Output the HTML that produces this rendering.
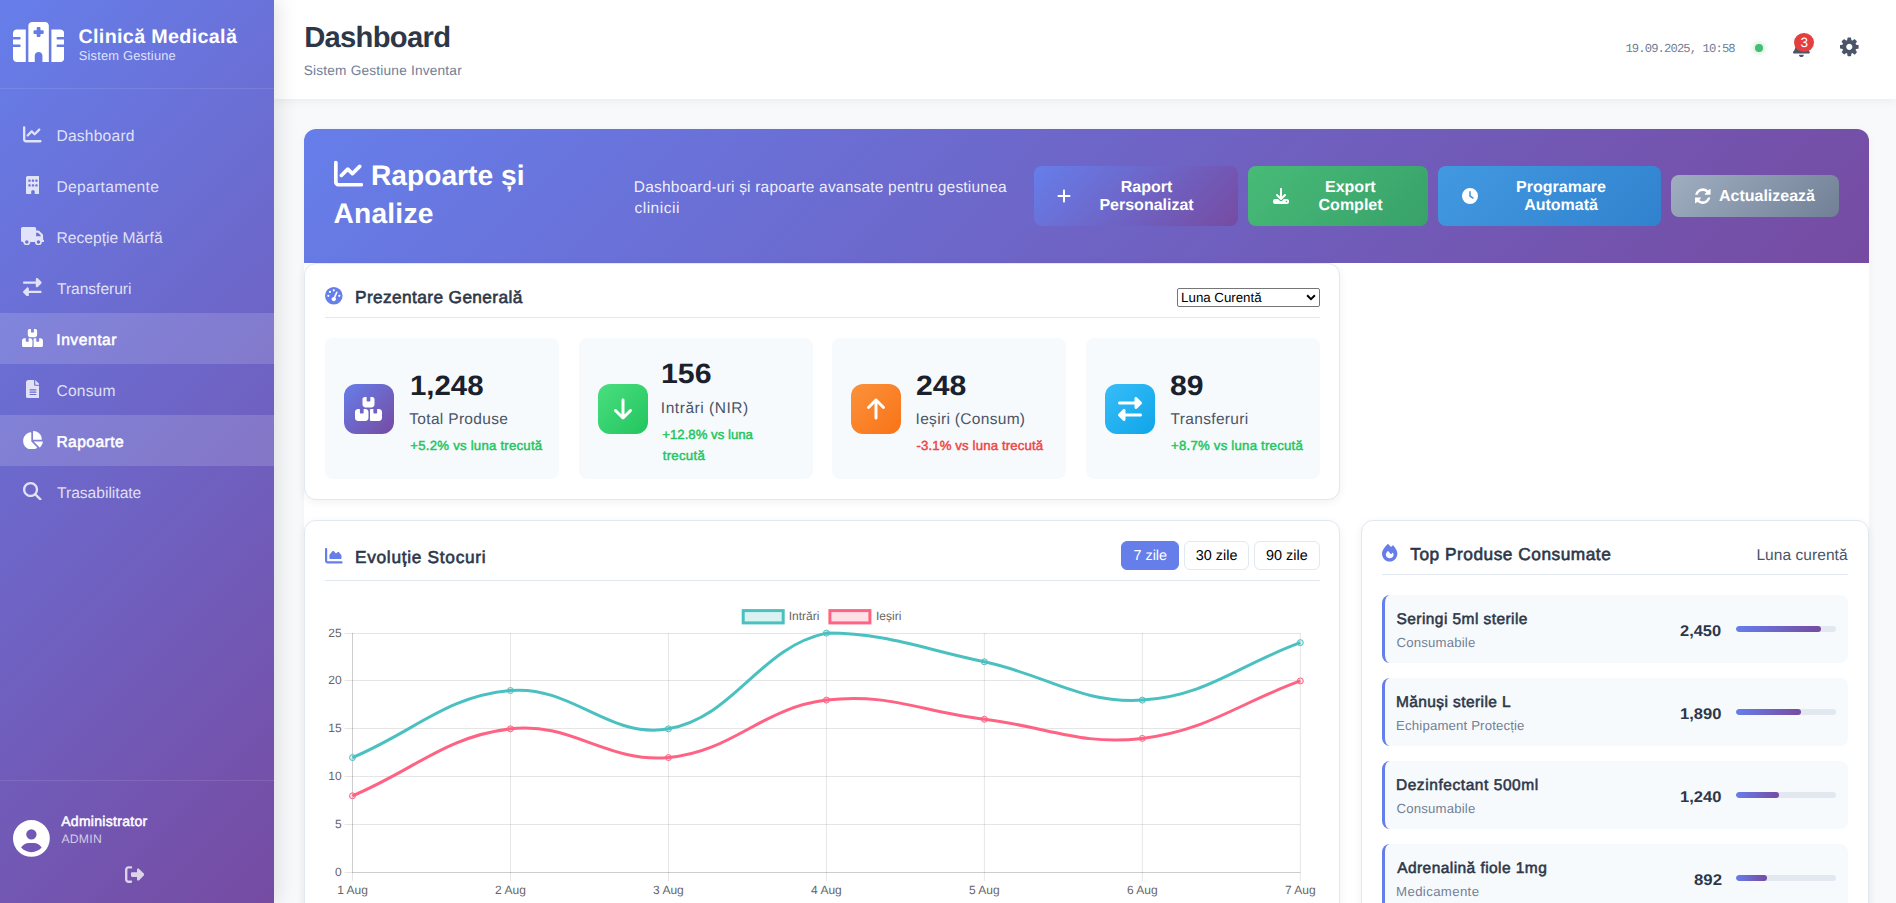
<!DOCTYPE html>
<html lang="ro">
<head>
<meta charset="utf-8">
<title>Clinică Medicală - Rapoarte și Analize</title>
<style>
*{box-sizing:border-box;margin:0;padding:0}
html,body{width:1896px;height:903px;overflow:hidden}
body{font-family:"Liberation Sans",sans-serif;background:#f8f9fb;color:#2d3748;position:relative;text-rendering:geometricPrecision}
.abs{position:absolute}
svg{display:block}
.t{position:absolute;white-space:nowrap;line-height:1;display:block;font-weight:400}
h1,h3,p{font-size:16px;font-weight:400}
#sidebar{position:absolute;left:0;top:0;width:274px;height:903px;background:linear-gradient(135deg,#667eea 0%,#764ba2 100%);box-shadow:4px 0 20px rgba(0,0,0,.11);z-index:5;color:#fff}
#sb-head{position:absolute;left:0;top:0;width:274px;height:89px;border-bottom:1px solid rgba(255,255,255,.1)}
.nav{position:absolute;left:0;width:274px;height:51px;display:block}
.nav.active{background:rgba(255,255,255,.15)}
#sb-foot{position:absolute;left:0;top:780px;width:274px;height:123px;border-top:1px solid rgba(255,255,255,.1)}
#topbar{position:absolute;left:274px;top:0;width:1622px;height:99px;background:#fff;box-shadow:0 2px 10px rgba(0,0,0,.06);z-index:3}
#panel{position:absolute;left:304px;top:129px;width:1565px;height:800px;background:#fff;border-radius:12px;box-shadow:0 2px 10px rgba(0,0,0,.04);z-index:1}
#banner{position:absolute;left:0;top:0;width:1565px;height:134px;border-radius:12px 12px 0 0;background:linear-gradient(135deg,#667eea 0%,#764ba2 100%)}
.btn{position:absolute;border-radius:8px}
.card{position:absolute;background:#fff;border:1px solid #e2e8f0;border-radius:12px;box-shadow:0 2px 10px rgba(0,0,0,.055)}
.hr{position:absolute;height:1px;background:#e2e8f0}
.tile{position:absolute;width:234px;height:141px;background:#f7fafc;border-radius:8px}
.ib{position:absolute;width:50px;height:50px;border-radius:12px}
.item{position:absolute;width:466px;height:68px;background:#f7fafc;border-left:3px solid #667eea;border-radius:8px}
.bar{position:absolute;width:100px;height:6px;border-radius:3px;background:#e2e8f0;overflow:hidden}
.bar i{display:block;height:6px;border-radius:3px;background:linear-gradient(90deg,#667eea,#764ba2)}
.sel{position:absolute;border:1px solid #767676;border-radius:2px;background:#fff}
.pbtn{position:absolute;border:1px solid #e2e8f0;border-radius:6px;background:#fff}
.pbtn.on{background:#667eea;border-color:#667eea}

</style>
</head>
<body>

<aside id="sidebar">
<div id="sb-head">
<svg class="abs" style="left:13.30px;top:22.10px;" width="51.20" height="40.00" viewBox="0 0 640 512" preserveAspectRatio="none"><path fill="#fff" d="M192 48c0-26.500 21.500-48 48-48L400 0c26.500 0 48 21.500 48 48l0 464-80 0 0-80c0-26.500-21.500-48-48-48s-48 21.500-48 48l0 80-80 0 0-464zM48 96l112 0 0 416L48 512c-26.500 0-48-21.500-48-48L0 320l80 0c8.800 0 16-7.200 16-16s-7.200-16-16-16L0 288l0-64 80 0c8.800 0 16-7.200 16-16s-7.200-16-16-16L0 192l0-48c0-26.500 21.500-48 48-48zm544 0c26.500 0 48 21.500 48 48l0 48-80 0c-8.800 0-16 7.200-16 16s7.200 16 16 16l80 0 0 64-80 0c-8.800 0-16 7.200-16 16s7.200 16 16 16l80 0 0 144c0 26.500-21.500 48-48 48l-112 0 0-416 112 0zM312 64c-8.800 0-16 7.200-16 16l0 24-24 0c-8.800 0-16 7.200-16 16l0 16c0 8.800 7.200 16 16 16l24 0 0 24c0 8.800 7.200 16 16 16l16 0c8.800 0 16-7.200 16-16l0-24 24 0c8.800 0 16-7.200 16-16l0-16c0-8.800-7.200-16-16-16l-24 0 0-24c0-8.800-7.200-16-16-16l-16 0z"/></svg>
<div class="brand">
<span class="t" style="left:78.49px;top:26px;line-height:22px;font-size:19.7px;color:#fff;font-weight:700;letter-spacing:0.346px;">Clinică Medicală</span>
<span class="t" style="left:78.72px;top:48px;line-height:15px;font-size:12.85px;color:rgba(255,255,255,.8);letter-spacing:0.201px;">Sistem Gestiune</span>
</div>
</div>
<nav>
<a class="nav" style="top:108.8px">
<svg class="abs" style="left:23.20px;top:16.00px;" width="18.60" height="18.60" viewBox="0 0 512 512" preserveAspectRatio="none"><path fill="rgba(255,255,255,.8)" d="M64 64c0-17.700-14.300-32-32-32S0 46.300 0 64L0 400c0 44.200 35.800 80 80 80l400 0c17.700 0 32-14.300 32-32s-14.300-32-32-32L80 416c-8.800 0-16-7.200-16-16L64 64zm406.600 86.600c12.500-12.500 12.500-32.800 0-45.300s-32.800-12.500-45.300 0L320 210.700l-57.400-57.400c-12.500-12.500-32.800-12.500-45.300 0l-112 112c-12.500 12.500-12.500 32.800 0 45.300s32.800 12.500 45.300 0L240 221.300l57.400 57.400c12.500 12.500 32.800 12.500 45.300 0l128-128z"/></svg>
<span class="t" style="left:56.42px;top:19.2px;line-height:18px;font-size:15.6px;color:rgba(255,255,255,.8);letter-spacing:0.224px;">Dashboard</span>
</a>
<a class="nav" style="top:159.8px">
<svg class="abs" style="left:25.52px;top:16.00px;" width="13.95" height="18.60" viewBox="0 0 384 512" preserveAspectRatio="none"><path fill="rgba(255,255,255,.8)" d="M48 0C21.500 0 0 21.500 0 48L0 464c0 26.500 21.500 48 48 48l96 0 0-80c0-26.500 21.500-48 48-48s48 21.500 48 48l0 80 96 0c26.500 0 48-21.500 48-48l0-416c0-26.500-21.500-48-48-48L48 0zM64 240c0-8.800 7.200-16 16-16l32 0c8.800 0 16 7.200 16 16l0 32c0 8.800-7.200 16-16 16l-32 0c-8.800 0-16-7.200-16-16l0-32zm112-16l32 0c8.800 0 16 7.200 16 16l0 32c0 8.800-7.200 16-16 16l-32 0c-8.800 0-16-7.200-16-16l0-32c0-8.800 7.200-16 16-16zm80 16c0-8.800 7.200-16 16-16l32 0c8.800 0 16 7.200 16 16l0 32c0 8.800-7.200 16-16 16l-32 0c-8.800 0-16-7.200-16-16l0-32zM80 96l32 0c8.800 0 16 7.200 16 16l0 32c0 8.800-7.200 16-16 16l-32 0c-8.800 0-16-7.200-16-16l0-32c0-8.800 7.200-16 16-16zm80 16c0-8.800 7.200-16 16-16l32 0c8.800 0 16 7.200 16 16l0 32c0 8.800-7.200 16-16 16l-32 0c-8.800 0-16-7.200-16-16l0-32zM272 96l32 0c8.800 0 16 7.200 16 16l0 32c0 8.800-7.200 16-16 16l-32 0c-8.800 0-16-7.200-16-16l0-32c0-8.800 7.200-16 16-16z"/></svg>
<span class="t" style="left:56.42px;top:19.2px;line-height:18px;font-size:15.6px;color:rgba(255,255,255,.8);letter-spacing:0.331px;">Departamente</span>
</a>
<a class="nav" style="top:210.8px">
<svg class="abs" style="left:20.88px;top:16.00px;" width="23.25" height="18.60" viewBox="0 0 640 512" preserveAspectRatio="none"><path fill="rgba(255,255,255,.8)" d="M48 0C21.500 0 0 21.500 0 48L0 368c0 26.500 21.500 48 48 48l16 0c0 53 43 96 96 96s96-43 96-96l128 0c0 53 43 96 96 96s96-43 96-96l32 0c17.700 0 32-14.300 32-32s-14.300-32-32-32l0-64 0-32 0-18.700c0-17-6.700-33.300-18.700-45.300L512 114.700c-12-12-28.300-18.700-45.300-18.700L416 96l0-48c0-26.500-21.500-48-48-48L48 0zM416 160l50.700 0L544 237.300l0 18.700-128 0 0-96zM112 416a48 48 0 1 1 96 0 48 48 0 1 1 -96 0zm368-48a48 48 0 1 1 0 96 48 48 0 1 1 0-96z"/></svg>
<span class="t" style="left:56.42px;top:19.2px;line-height:18px;font-size:15.6px;color:rgba(255,255,255,.8);letter-spacing:0.033px;">Recepție Mărfă</span>
</a>
<a class="nav" style="top:261.8px">
<svg class="abs" style="left:23.20px;top:16.00px;" width="18.60" height="18.60" viewBox="0 0 512 512" preserveAspectRatio="none"><path fill="rgba(255,255,255,.8)" d="M32 96l320 0 0-64c0-12.900 7.800-24.600 19.800-29.600s25.700-2.200 34.900 6.900l96 96c6 6 9.400 14.100 9.400 22.600s-3.400 16.600-9.400 22.600l-96 96c-9.200 9.200-22.900 11.900-34.900 6.900s-19.800-16.600-19.800-29.600l0-64L32 160c-17.700 0-32-14.300-32-32s14.300-32 32-32zM480 352c17.700 0 32 14.300 32 32s-14.300 32-32 32l-320 0 0 64c0 12.900-7.800 24.600-19.800 29.600s-25.700 2.200-34.900-6.900l-96-96c-6-6-9.400-14.100-9.400-22.600s3.400-16.600 9.400-22.600l96-96c9.200-9.200 22.900-11.900 34.900-6.900s19.800 16.600 19.800 29.600l0 64 320 0z"/></svg>
<span class="t" style="left:57.05px;top:19.2px;line-height:18px;font-size:15.6px;color:rgba(255,255,255,.8);letter-spacing:-0.041px;">Transferuri</span>
</a>
<a class="nav active" style="top:312.8px">
<svg class="abs" style="left:22.04px;top:16.00px;" width="20.93" height="18.60" viewBox="0 0 576 512" preserveAspectRatio="none"><path fill="#fff" d="M248 0L208 0c-26.500 0-48 21.500-48 48l0 112c0 35.300 28.700 64 64 64l128 0c35.300 0 64-28.700 64-64l0-112c0-26.500-21.500-48-48-48L328 0l0 80c0 8.800-7.200 16-16 16l-48 0c-8.800 0-16-7.200-16-16l0-80zM64 256c-35.300 0-64 28.700-64 64L0 448c0 35.300 28.700 64 64 64l160 0c35.300 0 64-28.700 64-64l0-128c0-35.300-28.700-64-64-64l-40 0 0 80c0 8.800-7.200 16-16 16l-48 0c-8.800 0-16-7.200-16-16l0-80-40 0zM352 512l160 0c35.300 0 64-28.700 64-64l0-128c0-35.300-28.700-64-64-64l-40 0 0 80c0 8.800-7.200 16-16 16l-48 0c-8.800 0-16-7.200-16-16l0-80-40 0c-15 0-28.800 5.100-39.700 13.800c4.900 10.400 7.700 22 7.700 34.200l0 160c0 12.200-2.800 23.800-7.700 34.200C323.200 506.900 337 512 352 512z"/></svg>
<span class="t" style="left:56.26px;top:19.2px;line-height:18px;font-size:15.6px;color:#fff;letter-spacing:0.548px;-webkit-text-stroke:0.55px #fff;">Inventar</span>
</a>
<a class="nav" style="top:363.8px">
<svg class="abs" style="left:25.52px;top:16.00px;" width="13.95" height="18.60" viewBox="0 0 384 512" preserveAspectRatio="none"><path fill="rgba(255,255,255,.8)" d="M64 0C28.700 0 0 28.700 0 64L0 448c0 35.300 28.700 64 64 64l256 0c35.300 0 64-28.700 64-64l0-288-128 0c-17.700 0-32-14.300-32-32L224 0 64 0zM256 0l0 128 128 0L256 0zM112 256l160 0c8.800 0 16 7.200 16 16s-7.200 16-16 16l-160 0c-8.800 0-16-7.200-16-16s7.200-16 16-16zm0 64l160 0c8.800 0 16 7.200 16 16s-7.200 16-16 16l-160 0c-8.800 0-16-7.200-16-16s7.200-16 16-16zm0 64l160 0c8.800 0 16 7.200 16 16s-7.200 16-16 16l-160 0c-8.800 0-16-7.200-16-16s7.200-16 16-16z"/></svg>
<span class="t" style="left:56.61px;top:19.2px;line-height:18px;font-size:15.6px;color:rgba(255,255,255,.8);letter-spacing:0.148px;">Consum</span>
</a>
<a class="nav active" style="top:414.8px">
<svg class="abs" style="left:22.04px;top:16.00px;" width="20.93" height="18.60" viewBox="0 0 576 512" preserveAspectRatio="none"><path fill="#fff" d="M304 240l0-223.400c0-9 7-16.600 16-16.600C443.700 0 544 100.300 544 224c0 9-7.600 16-16.600 16L304 240zM32 272C32 150.700 122.100 50.300 239 34.300c9.200-1.300 17 6.100 17 15.400L256 288 412.500 444.500c6.700 6.700 6.200 17.700-1.500 23.100C371.800 495.600 323.800 512 272 512C139.500 512 32 404.600 32 272zm526.400 16c9.300 0 16.600 7.800 15.400 17c-7.700 55.900-34.600 105.600-73.900 142.300c-6 5.600-15.400 5.200-21.200-.7L320 288l238.400 0z"/></svg>
<span class="t" style="left:56.42px;top:19.2px;line-height:18px;font-size:15.6px;color:#fff;letter-spacing:0.431px;-webkit-text-stroke:0.55px #fff;">Rapoarte</span>
</a>
<a class="nav" style="top:465.8px">
<svg class="abs" style="left:23.20px;top:16.00px;" width="18.60" height="18.60" viewBox="0 0 512 512" preserveAspectRatio="none"><path fill="rgba(255,255,255,.8)" d="M416 208c0 45.900-14.900 88.300-40 122.700L502.600 457.400c12.500 12.500 12.500 32.800 0 45.300s-32.800 12.500-45.300 0L330.700 376c-34.400 25.200-76.800 40-122.700 40C93.100 416 0 322.900 0 208S93.100 0 208 0S416 93.100 416 208zM208 352a144 144 0 1 0 0-288 144 144 0 1 0 0 288z"/></svg>
<span class="t" style="left:57.05px;top:19.2px;line-height:18px;font-size:15.6px;color:rgba(255,255,255,.8);letter-spacing:-0.010px;">Trasabilitate</span>
</a>
</nav>
<div id="sb-foot">
<svg class="abs" style="left:13.40px;top:39.00px;" width="36.80" height="36.80" viewBox="0 0 512 512" preserveAspectRatio="none"><path fill="#fff" d="M399 384.200C376.900 345.800 335.400 320 288 320l-64 0c-47.400 0-88.900 25.800-111 64.200c35.200 39.200 86.200 63.800 143 63.800s107.800-24.700 143-63.800zM0 256a256 256 0 1 1 512 0A256 256 0 1 1 0 256zm256 16a72 72 0 1 0 0-144 72 72 0 1 0 0 144z"/></svg>
<div class="user">
<span class="t" style="left:61.17px;top:32px;line-height:16px;font-size:14px;color:#fff;letter-spacing:0.299px;-webkit-text-stroke:0.5px #fff;">Administrator</span>
<span class="t" style="left:61.38px;top:51px;line-height:15px;font-size:12.2px;color:rgba(255,255,255,.7);letter-spacing:0.272px;">ADMIN</span>
</div>
<a class="logout">
<svg class="abs" style="left:124.50px;top:84.40px;" width="19.20" height="19.20" viewBox="0 0 512 512" preserveAspectRatio="none"><path fill="rgba(255,255,255,.75)" d="M377.900 105.900L500.700 228.700c7.200 7.200 11.300 17.100 11.300 27.300s-4.100 20.100-11.300 27.300L377.900 406.100c-6.400 6.400-15 9.900-24 9.900c-18.700 0-33.900-15.200-33.900-33.900l0-62.100-128 0c-17.700 0-32-14.300-32-32l0-64c0-17.700 14.300-32 32-32l128 0 0-62.100c0-18.700 15.200-33.900 33.900-33.900c9 0 17.600 3.600 24 9.900zM160 96L96 96c-17.700 0-32 14.300-32 32l0 256c0 17.700 14.300 32 32 32l64 0c17.700 0 32 14.300 32 32s-14.300 32-32 32l-64 0c-53 0-96-43-96-96L0 128C0 75 43 32 96 32l64 0c17.700 0 32 14.300 32 32s-14.300 32-32 32z"/></svg>
</a>
</div>
</aside>
<header id="topbar">
<div class="titles">
<span class="t" style="left:30.15px;top:22px;line-height:32px;font-size:29.2px;color:#2d3748;font-weight:700;letter-spacing:-0.697px;z-index:1;">Dashboard</span>
<span class="t" style="left:29.68px;top:63px;line-height:16px;font-size:13.7px;color:#718096;letter-spacing:0.190px;">Sistem Gestiune Inventar</span>
</div>
<div class="tools">
<span class="t" style="left:1351.42px;top:42px;line-height:15px;font-size:12.2px;color:#718096;letter-spacing:-0.879px;font-family:'Liberation Mono',monospace;">19.09.2025, 10:58</span>
<span class="abs" style="left:1481px;top:44px;width:8px;height:8px;border-radius:50%;background:#48bb78;box-shadow:0 0 6px rgba(72,187,120,.6)"></span>
<a class="bellwrap">
<svg class="abs" style="left:1518.90px;top:37.50px;" width="16.80" height="19.20" viewBox="0 0 448 512" preserveAspectRatio="none"><path fill="#4a5568" d="M224 0c-17.700 0-32 14.300-32 32l0 19.200C119 66 64 130.600 64 208l0 18.800c0 47-17.300 92.400-48.500 127.600l-7.400 8.300c-8.400 9.400-10.400 22.900-5.300 34.400S19.400 416 32 416l384 0c12.600 0 24-7.400 29.200-18.900s3.100-25-5.300-34.400l-7.400-8.300C401.300 319.200 384 273.900 384 226.800l0-18.800c0-77.400-55-142-128-156.800L256 32c0-17.700-14.300-32-32-32zm45.300 493.300c12-12 18.700-28.300 18.700-45.300l-64 0-64 0c0 17 6.700 33.300 18.700 45.300s28.300 18.700 45.300 18.700s33.300-6.700 45.300-18.700z"/></svg>
<span class="abs" style="left:1520px;top:32.8px;width:20px;height:19.2px;border-radius:50%;background:#e53e3e"></span>
<span class="t" style="left:1526.43px;top:35px;line-height:16px;font-size:13.5px;color:#fff;">3</span>
</a>
<a class="gear">
<svg class="abs" style="left:1566.30px;top:36.20px;" width="18.60" height="21.70" viewBox="0 0 1536 1792" preserveAspectRatio="none"><g transform="translate(0,1536) scale(1,-1)"><path fill="#4a5568" d="M1024 640q0 106 -75 181t-181 75t-181 -75t-75 -181t75 -181t181 -75t181 75t75 181zM1536 749v-222q0 -12 -8 -23t-20 -13l-185 -28q-19 -54 -39 -91q35 -50 107 -138q10 -12 10 -25t-9 -23q-27 -37 -99 -108t-94 -71q-12 0 -26 9l-138 108q-44 -23 -91 -38 q-16 -136 -29 -186q-7 -28 -36 -28h-222q-14 0 -24.5 8.5t-11.5 21.5l-28 184q-49 16 -90 37l-141 -107q-10 -9 -25 -9q-14 0 -25 11q-126 114 -165 168q-7 10 -7 23q0 12 8 23q15 21 51 66.5t54 70.5q-27 50 -41 99l-183 27q-13 2 -21 12.5t-8 23.5v222q0 12 8 23t19 13 l186 28q14 46 39 92q-40 57 -107 138q-10 12 -10 24q0 10 9 23q26 36 98.5 107.5t94.5 71.5q13 0 26 -10l138 -107q44 23 91 38q16 136 29 186q7 28 36 28h222q14 0 24.5 -8.5t11.5 -21.5l28 -184q49 -16 90 -37l142 107q9 9 24 9q13 0 25 -10q129 -119 165 -170q7 -8 7 -22 q0 -12 -8 -23q-15 -21 -51 -66.5t-54 -70.5q26 -50 41 -98l183 -28q13 -2 21 -12.5t8 -23.5z"/></g></svg>
</a>
</div>
</header>
<main id="panel">
<section id="banner">
<h1>
<svg class="abs" style="left:29.90px;top:30.30px;" width="29.40" height="29.40" viewBox="0 0 512 512" preserveAspectRatio="none"><path fill="#fff" d="M64 64c0-17.700-14.300-32-32-32S0 46.300 0 64L0 400c0 44.200 35.800 80 80 80l400 0c17.700 0 32-14.300 32-32s-14.300-32-32-32L80 416c-8.800 0-16-7.200-16-16L64 64zm406.600 86.600c12.500-12.500 12.500-32.800 0-45.300s-32.800-12.500-45.300 0L320 210.700l-57.400-57.400c-12.500-12.500-32.800-12.500-45.300 0l-112 112c-12.500 12.500-12.500 32.800 0 45.300s32.800 12.500 45.300 0L240 221.300l57.400 57.400c12.500 12.500 32.800 12.500 45.300 0l128-128z"/></svg>
<span class="t" style="left:67.01px;top:31px;line-height:31px;font-size:28.2px;color:#fff;font-weight:700;letter-spacing:-0.005px;">Rapoarte și</span>
<span class="t" style="left:29.50px;top:69px;line-height:31px;font-size:28.2px;color:#fff;font-weight:700;letter-spacing:0.196px;">Analize</span>
</h1>
<p>
<span class="t" style="left:329.83px;top:50px;line-height:18px;font-size:15.5px;color:rgba(255,255,255,.9);letter-spacing:0.200px;">Dashboard-uri și rapoarte avansate pentru gestiunea</span>
<span class="t" style="left:330.44px;top:71px;line-height:18px;font-size:15.5px;color:rgba(255,255,255,.9);letter-spacing:0.508px;">clinicii</span>
</p>
<div class="actions">
<div class="btn" role="button" style="left:729.5px;top:37px;width:204.5px;height:60px;background:linear-gradient(135deg,#667eea 0%,#764ba2 100%)"><svg class="abs" style="left:23.50px;top:21.90px;" width="14.00" height="16.00" viewBox="0 0 448 512" preserveAspectRatio="none"><path fill="#fff" d="M256 80c0-17.700-14.300-32-32-32s-32 14.300-32 32l0 144L48 224c-17.700 0-32 14.300-32 32s14.300 32 32 32l144 0 0 144c0 17.700 14.300 32 32 32s32-14.300 32-32l0-144 144 0c17.700 0 32-14.300 32-32s-14.300-32-32-32l-144 0 0-144z"/></svg><span class="t" style="left:87.28px;top:13px;line-height:18px;font-size:16px;color:#fff;font-weight:700;">Raport</span><span class="t" style="left:65.93px;top:31px;line-height:18px;font-size:16px;color:#fff;font-weight:700;">Personalizat</span></div>
<div class="btn" role="button" style="left:944px;top:37px;width:180px;height:60px;background:linear-gradient(135deg,#48bb78 0%,#38a169 100%)"><svg class="abs" style="left:24.60px;top:21.90px;" width="16.00" height="16.00" viewBox="0 0 512 512" preserveAspectRatio="none"><path fill="#fff" d="M288 32c0-17.700-14.300-32-32-32s-32 14.300-32 32l0 242.700-73.400-73.400c-12.500-12.500-32.800-12.500-45.300 0s-12.500 32.800 0 45.300l128 128c12.500 12.500 32.800 12.500 45.300 0l128-128c12.500-12.500 12.500-32.800 0-45.300s-32.800-12.500-45.300 0L288 274.700 288 32zM64 352c-35.300 0-64 28.700-64 64l0 32c0 35.300 28.700 64 64 64l384 0c35.300 0 64-28.700 64-64l0-32c0-35.300-28.700-64-64-64l-101.500 0-45.300 45.300c-25 25-65.500 25-90.500 0L165.500 352 64 352zm368 56a24 24 0 1 1 0 48 24 24 0 1 1 0-48z"/></svg><span class="t" style="left:77.03px;top:13px;line-height:18px;font-size:16px;color:#fff;font-weight:700;">Export</span><span class="t" style="left:70.57px;top:31px;line-height:18px;font-size:16px;color:#fff;font-weight:700;">Complet</span></div>
<div class="btn" role="button" style="left:1134px;top:37px;width:223px;height:60px;background:linear-gradient(135deg,#4299e1 0%,#3182ce 100%)"><svg class="abs" style="left:23.70px;top:21.90px;" width="16.00" height="16.00" viewBox="0 0 512 512" preserveAspectRatio="none"><path fill="#fff" d="M256 0a256 256 0 1 1 0 512A256 256 0 1 1 256 0zM232 120l0 136c0 8 4 15.500 10.700 20l96 64c11 7.400 25.900 4.400 33.300-6.700s4.400-25.900-6.700-33.300L280 243.200 280 120c0-13.300-10.700-24-24-24s-24 10.700-24 24z"/></svg><span class="t" style="left:78.12px;top:13px;line-height:18px;font-size:16px;color:#fff;font-weight:700;">Programare</span><span class="t" style="left:86.16px;top:31px;line-height:18px;font-size:16px;color:#fff;font-weight:700;">Automată</span></div>
<div class="btn" role="button" style="left:1367px;top:46px;width:168px;height:42px;background:linear-gradient(135deg,#a0aec0 0%,#718096 100%)"><svg class="abs" style="left:24.20px;top:12.20px;" width="15.60" height="18.20" viewBox="0 0 1536 1792" preserveAspectRatio="none"><g transform="translate(0,1536) scale(1,-1)"><path fill="#fff" d="M1511 480q0 -5 -1 -7q-64 -268 -268 -434.5t-478 -166.5q-146 0 -282.5 55t-243.5 157l-129 -129q-19 -19 -45 -19t-45 19t-19 45v448q0 26 19 45t45 19h448q26 0 45 -19t19 -45t-19 -45l-137 -137q71 -66 161 -102t187 -36q134 0 250 65t186 179q11 17 53 117 q8 23 30 23h192q13 0 22.5 -9.5t9.5 -22.5zM1536 1280v-448q0 -26 -19 -45t-45 -19h-448q-26 0 -45 19t-19 45t19 45l138 138q-148 137 -349 137q-134 0 -250 -65t-186 -179q-11 -17 -53 -117q-8 -23 -30 -23h-199q-13 0 -22.5 9.5t-9.5 22.5v7q65 268 270 434.5t480 166.5 q146 0 284 -55.5t245 -156.5l130 129q19 19 45 19t45 -19t19 -45z"/></g></svg><span class="t" style="left:47.93px;top:13px;line-height:18px;font-size:16px;color:#fff;font-weight:700;">Actualizează</span></div>
</div>
</section>
<section class="card" style="left:0px;top:134px;width:1036px;height:237px">
<h3>
<svg class="abs" style="left:20.20px;top:23.20px;" width="17.60" height="17.60" viewBox="0 0 512 512" preserveAspectRatio="none"><path fill="#667eea" d="M0 256a256 256 0 1 1 512 0A256 256 0 1 1 0 256zM288 96a32 32 0 1 0 -64 0 32 32 0 1 0 64 0zM256 416c35.300 0 64-28.700 64-64c0-17.400-6.900-33.100-18.100-44.600L366 161.700c5.300-12.100-.2-26.300-12.300-31.600s-26.300 .2-31.600 12.300L257.900 288c-.6 0-1.300 0-1.900 0c-35.300 0-64 28.700-64 64s28.700 64 64 64zM176 144a32 32 0 1 0 -64 0 32 32 0 1 0 64 0zM96 288a32 32 0 1 0 0-64 32 32 0 1 0 0 64zm352-32a32 32 0 1 0 -64 0 32 32 0 1 0 64 0z"/></svg>
<span class="t" style="left:50.08px;top:23px;line-height:20px;font-size:17.3px;color:#2d3748;letter-spacing:0.377px;-webkit-text-stroke:0.6px #2d3748;">Prezentare Generală</span>
</h3>
<div class="sel" style="left:872px;top:24px;width:143px;height:19px">
<span class="t" style="left:3.11px;top:1px;line-height:16px;font-size:13.33px;color:#000;letter-spacing:-0.026px;">Luna Curentă</span>
<svg class="abs" style="left:127.5px;top:4.5px" width="10" height="7" viewBox="0 0 10 7"><path d="M1.1 1.3 L5 5.1 L8.9 1.3" fill="none" stroke="#000" stroke-width="2" stroke-linecap="butt" stroke-linejoin="miter"/></svg>
</div>
<div class="hr" style="left:20px;top:53px;width:995px"></div>
<div class="tile" style="left:20px;top:74px">
<div class="ib" style="left:19.3px;top:46px;background:linear-gradient(135deg,#667eea 0%,#764ba2 100%)">
<svg class="abs" style="left:11.20px;top:13.00px;" width="27.00" height="24.00" viewBox="0 0 576 512" preserveAspectRatio="none"><path fill="#fff" d="M248 0L208 0c-26.500 0-48 21.500-48 48l0 112c0 35.300 28.700 64 64 64l128 0c35.300 0 64-28.700 64-64l0-112c0-26.500-21.500-48-48-48L328 0l0 80c0 8.800-7.200 16-16 16l-48 0c-8.800 0-16-7.200-16-16l0-80zM64 256c-35.300 0-64 28.700-64 64L0 448c0 35.300 28.700 64 64 64l160 0c35.300 0 64-28.700 64-64l0-128c0-35.300-28.700-64-64-64l-40 0 0 80c0 8.800-7.200 16-16 16l-48 0c-8.800 0-16-7.200-16-16l0-80-40 0zM352 512l160 0c35.300 0 64-28.700 64-64l0-128c0-35.300-28.700-64-64-64l-40 0 0 80c0 8.800-7.200 16-16 16l-48 0c-8.800 0-16-7.200-16-16l0-80-40 0c-15 0-28.800 5.100-39.700 13.800c4.900 10.400 7.700 22 7.700 34.200l0 160c0 12.200-2.800 23.800-7.700 34.200C323.200 506.900 337 512 352 512z"/></svg>
</div>
<div class="meta">
<span class="t" style="left:85.15px;top:33px;line-height:30px;font-size:28px;color:#1a202c;font-weight:700;transform:scaleX(1.0496);transform-origin:0 0;">1,248</span>
<span class="t" style="left:84.25px;top:73px;line-height:18px;font-size:15.5px;color:#4a5568;letter-spacing:0.321px;">Total Produse</span>
<span class="t" style="left:85.36px;top:100px;line-height:16px;font-size:13.2px;color:#22c55e;letter-spacing:0.228px;-webkit-text-stroke:0.45px #22c55e;">+5.2% vs luna trecută</span>
</div>
</div>
<div class="tile" style="left:274px;top:74px">
<div class="ib" style="left:19.3px;top:46px;background:linear-gradient(135deg,#4ade80 0%,#22c55e 100%)">
<svg class="abs" style="left:15.70px;top:13.00px;" width="18.00" height="24.00" viewBox="0 0 384 512" preserveAspectRatio="none"><path fill="#fff" d="M169.400 470.600c12.500 12.500 32.800 12.500 45.300 0l160-160c12.500-12.500 12.500-32.800 0-45.300s-32.800-12.500-45.300 0L224 370.800 224 64c0-17.700-14.300-32-32-32s-32 14.300-32 32l0 306.700L54.600 265.400c-12.500-12.500-32.800-12.500-45.300 0s-12.500 32.800 0 45.300l160 160z"/></svg>
</div>
<div class="meta">
<span class="t" style="left:82.49px;top:21px;line-height:30px;font-size:28px;color:#1a202c;font-weight:700;transform:scaleX(1.0832);transform-origin:0 0;">156</span>
<span class="t" style="left:81.87px;top:62px;line-height:18px;font-size:15.5px;color:#4a5568;letter-spacing:0.537px;">Intrări (NIR)</span>
<span class="t" style="left:83.26px;top:89px;line-height:16px;font-size:13.2px;color:#22c55e;letter-spacing:0.008px;-webkit-text-stroke:0.45px #22c55e;">+12.8% vs luna</span>
<span class="t" style="left:83.70px;top:110px;line-height:16px;font-size:13.2px;color:#22c55e;letter-spacing:0.295px;-webkit-text-stroke:0.45px #22c55e;">trecută</span>
</div>
</div>
<div class="tile" style="left:526.7px;top:74px">
<div class="ib" style="left:19.3px;top:46px;background:linear-gradient(135deg,#fb923c 0%,#f97316 100%)">
<svg class="abs" style="left:15.70px;top:13.00px;" width="18.00" height="24.00" viewBox="0 0 384 512" preserveAspectRatio="none"><path fill="#fff" d="M214.600 41.400c-12.500-12.500-32.800-12.500-45.300 0l-160 160c-12.500 12.500-12.500 32.800 0 45.300s32.800 12.500 45.300 0L160 141.200 160 448c0 17.700 14.300 32 32 32s32-14.300 32-32l0-306.700L329.400 246.600c12.500 12.500 32.800 12.500 45.300 0s12.500-32.800 0-45.300l-160-160z"/></svg>
</div>
<div class="meta">
<span class="t" style="left:84.25px;top:33px;line-height:30px;font-size:28px;color:#1a202c;font-weight:700;transform:scaleX(1.0783);transform-origin:0 0;">248</span>
<span class="t" style="left:83.87px;top:73px;line-height:18px;font-size:15.5px;color:#4a5568;letter-spacing:0.315px;">Ieșiri (Consum)</span>
<span class="t" style="left:84.71px;top:100px;line-height:16px;font-size:13.2px;color:#ef4444;letter-spacing:0.140px;-webkit-text-stroke:0.45px #ef4444;">-3.1% vs luna trecută</span>
</div>
</div>
<div class="tile" style="left:781px;top:74px">
<div class="ib" style="left:19.3px;top:46px;background:linear-gradient(135deg,#38bdf8 0%,#0ea5e9 100%)">
<svg class="abs" style="left:12.70px;top:13.00px;" width="24.00" height="24.00" viewBox="0 0 512 512" preserveAspectRatio="none"><path fill="#fff" d="M32 96l320 0 0-64c0-12.900 7.800-24.600 19.800-29.600s25.700-2.200 34.900 6.900l96 96c6 6 9.400 14.100 9.400 22.600s-3.400 16.600-9.400 22.600l-96 96c-9.200 9.200-22.900 11.900-34.900 6.900s-19.800-16.600-19.800-29.600l0-64L32 160c-17.700 0-32-14.300-32-32s14.300-32 32-32zM480 352c17.700 0 32 14.300 32 32s-14.300 32-32 32l-320 0 0 64c0 12.900-7.800 24.600-19.800 29.600s-25.700 2.200-34.900-6.900l-96-96c-6-6-9.400-14.100-9.400-22.600s3.400-16.600 9.400-22.600l96-96c9.200-9.200 22.900-11.900 34.900-6.900s19.800 16.600 19.800 29.600l0 64 320 0z"/></svg>
</div>
<div class="meta">
<span class="t" style="left:83.94px;top:33px;line-height:30px;font-size:28px;color:#1a202c;font-weight:700;transform:scaleX(1.0777);transform-origin:0 0;">89</span>
<span class="t" style="left:84.55px;top:73px;line-height:18px;font-size:15.5px;color:#4a5568;letter-spacing:0.333px;">Transferuri</span>
<span class="t" style="left:85.06px;top:100px;line-height:16px;font-size:13.2px;color:#22c55e;letter-spacing:0.228px;-webkit-text-stroke:0.45px #22c55e;">+8.7% vs luna trecută</span>
</div>
</div>
</section>
<section class="card" style="left:0px;top:391px;width:1036px;height:420px">
<h3>
<svg class="abs" style="left:20.20px;top:26.20px;" width="17.60" height="17.60" viewBox="0 0 512 512" preserveAspectRatio="none"><path fill="#667eea" d="M64 64c0-17.700-14.300-32-32-32S0 46.300 0 64L0 400c0 44.200 35.800 80 80 80l400 0c17.700 0 32-14.300 32-32s-14.300-32-32-32L80 416c-8.800 0-16-7.200-16-16L64 64zm96 288l288 0c17.700 0 32-14.300 32-32l0-68.200c0-7.600-2.700-15-7.700-20.800l-65.800-76.800c-12.100-14.200-33.700-15-46.900-1.800l-21 21c-10 10-26.400 9.200-35.400-1.600l-39.200-47c-12.600-15.100-35.700-15.400-48.700-.6L135.900 215c-5.100 5.800-7.900 13.300-7.900 21.100l0 84c0 17.700 14.300 32 32 32z"/></svg>
<span class="t" style="left:49.98px;top:26px;line-height:20px;font-size:17.3px;color:#2d3748;letter-spacing:0.707px;-webkit-text-stroke:0.6px #2d3748;">Evoluție Stocuri</span>
</h3>
<div class="periods">
<div class="pbtn on" role="button" style="left:816px;top:20px;width:58px;height:29px">
<span class="t" style="left:11.45px;top:6px;line-height:17px;font-size:14.4px;color:#fff;">7 zile</span>
</div>
<div class="pbtn" role="button" style="left:879px;top:20px;width:65px;height:29px">
<span class="t" style="left:10.84px;top:6px;line-height:17px;font-size:14.4px;color:#000;">30 zile</span>
</div>
<div class="pbtn" role="button" style="left:949px;top:20px;width:66px;height:29px">
<span class="t" style="left:11.08px;top:6px;line-height:17px;font-size:14.4px;color:#000;">90 zile</span>
</div>
</div>
<div class="hr" style="left:20px;top:59px;width:995px"></div>
<svg class="abs" style="left:-1px;top:69px" width="1036" height="313" viewBox="304 590 1036 313" font-family="'Liberation Sans',sans-serif" font-size="12" fill="#666">
<line x1="352.50" y1="633" x2="352.50" y2="881" stroke="rgba(0,0,0,0.1)" stroke-width="1"/>
<line x1="510.47" y1="633" x2="510.47" y2="881" stroke="rgba(0,0,0,0.1)" stroke-width="1"/>
<line x1="668.44" y1="633" x2="668.44" y2="881" stroke="rgba(0,0,0,0.1)" stroke-width="1"/>
<line x1="826.41" y1="633" x2="826.41" y2="881" stroke="rgba(0,0,0,0.1)" stroke-width="1"/>
<line x1="984.38" y1="633" x2="984.38" y2="881" stroke="rgba(0,0,0,0.1)" stroke-width="1"/>
<line x1="1142.35" y1="633" x2="1142.35" y2="881" stroke="rgba(0,0,0,0.1)" stroke-width="1"/>
<line x1="1300.32" y1="633" x2="1300.32" y2="881" stroke="rgba(0,0,0,0.1)" stroke-width="1"/>
<line x1="344.50" y1="872.50" x2="1300.32" y2="872.50" stroke="rgba(0,0,0,0.1)" stroke-width="1"/>
<line x1="344.50" y1="824.50" x2="1300.32" y2="824.50" stroke="rgba(0,0,0,0.1)" stroke-width="1"/>
<line x1="344.50" y1="776.50" x2="1300.32" y2="776.50" stroke="rgba(0,0,0,0.1)" stroke-width="1"/>
<line x1="344.50" y1="728.50" x2="1300.32" y2="728.50" stroke="rgba(0,0,0,0.1)" stroke-width="1"/>
<line x1="344.50" y1="680.50" x2="1300.32" y2="680.50" stroke="rgba(0,0,0,0.1)" stroke-width="1"/>
<line x1="344.50" y1="633.50" x2="1300.32" y2="633.50" stroke="rgba(0,0,0,0.1)" stroke-width="1"/>
<line x1="352.50" y1="633" x2="352.50" y2="873" stroke="rgba(0,0,0,0.1)" stroke-width="1"/>
<line x1="352.50" y1="872.5" x2="1300.32" y2="872.5" stroke="rgba(0,0,0,0.1)" stroke-width="1"/>
<text x="341.6" y="875.90" text-anchor="end">0</text>
<text x="341.6" y="827.90" text-anchor="end">5</text>
<text x="341.6" y="779.90" text-anchor="end">10</text>
<text x="341.6" y="731.90" text-anchor="end">15</text>
<text x="341.6" y="683.90" text-anchor="end">20</text>
<text x="341.6" y="636.90" text-anchor="end">25</text>
<text x="352.50" y="893.8" text-anchor="middle">1 Aug</text>
<text x="510.47" y="893.8" text-anchor="middle">2 Aug</text>
<text x="668.44" y="893.8" text-anchor="middle">3 Aug</text>
<text x="826.41" y="893.8" text-anchor="middle">4 Aug</text>
<text x="984.38" y="893.8" text-anchor="middle">5 Aug</text>
<text x="1142.35" y="893.8" text-anchor="middle">6 Aug</text>
<text x="1300.32" y="893.8" text-anchor="middle">7 Aug</text>
<rect x="743.2" y="610.6" width="40" height="12.3" fill="rgba(75,192,192,0.2)" stroke="rgb(75,192,192)" stroke-width="3"/>
<text x="788.7" y="619.9">Intrări</text>
<rect x="829.9" y="610.6" width="40" height="12.3" fill="rgba(255,99,132,0.2)" stroke="rgb(255,99,132)" stroke-width="3"/>
<text x="876.0" y="619.9">Ieșiri</text>
<path d="M352.50 757.54 C415.69 730.73 445.57 696.43 510.47 690.53 C571.95 684.94 609.29 739.57 668.44 728.82 C735.66 716.60 758.80 647.44 826.41 633.10 C885.18 633.10 921.58 648.50 984.38 661.82 C1047.96 675.30 1080.22 703.87 1142.35 700.10 C1206.60 696.21 1237.13 665.64 1300.32 642.67" fill="none" stroke="rgb(75,192,192)" stroke-width="3" stroke-linecap="butt" stroke-linejoin="miter"/>
<circle cx="352.50" cy="757.54" r="3" fill="rgba(75,192,192,0.2)" stroke="rgb(75,192,192)" stroke-width="1"/>
<circle cx="510.47" cy="690.53" r="3" fill="rgba(75,192,192,0.2)" stroke="rgb(75,192,192)" stroke-width="1"/>
<circle cx="668.44" cy="728.82" r="3" fill="rgba(75,192,192,0.2)" stroke="rgb(75,192,192)" stroke-width="1"/>
<circle cx="826.41" cy="633.10" r="3" fill="rgba(75,192,192,0.2)" stroke="rgb(75,192,192)" stroke-width="1"/>
<circle cx="984.38" cy="661.82" r="3" fill="rgba(75,192,192,0.2)" stroke="rgb(75,192,192)" stroke-width="1"/>
<circle cx="1142.35" cy="700.10" r="3" fill="rgba(75,192,192,0.2)" stroke="rgb(75,192,192)" stroke-width="1"/>
<circle cx="1300.32" cy="642.67" r="3" fill="rgba(75,192,192,0.2)" stroke="rgb(75,192,192)" stroke-width="1"/>
<path d="M352.50 795.82 C415.69 769.02 445.18 736.73 510.47 728.82 C571.56 721.42 606.70 763.15 668.44 757.54 C733.08 751.66 761.49 707.97 826.41 700.10 C887.87 692.66 921.19 711.59 984.38 719.25 C1047.57 726.91 1080.89 745.84 1142.35 738.39 C1207.27 730.52 1237.13 703.93 1300.32 680.96" fill="none" stroke="rgb(255,99,132)" stroke-width="3" stroke-linecap="butt" stroke-linejoin="miter"/>
<circle cx="352.50" cy="795.82" r="3" fill="rgba(255,99,132,0.2)" stroke="rgb(255,99,132)" stroke-width="1"/>
<circle cx="510.47" cy="728.82" r="3" fill="rgba(255,99,132,0.2)" stroke="rgb(255,99,132)" stroke-width="1"/>
<circle cx="668.44" cy="757.54" r="3" fill="rgba(255,99,132,0.2)" stroke="rgb(255,99,132)" stroke-width="1"/>
<circle cx="826.41" cy="700.10" r="3" fill="rgba(255,99,132,0.2)" stroke="rgb(255,99,132)" stroke-width="1"/>
<circle cx="984.38" cy="719.25" r="3" fill="rgba(255,99,132,0.2)" stroke="rgb(255,99,132)" stroke-width="1"/>
<circle cx="1142.35" cy="738.39" r="3" fill="rgba(255,99,132,0.2)" stroke="rgb(255,99,132)" stroke-width="1"/>
<circle cx="1300.32" cy="680.96" r="3" fill="rgba(255,99,132,0.2)" stroke="rgb(255,99,132)" stroke-width="1"/>
</svg>
</section>
<section class="card" style="left:1057px;top:391px;width:508px;height:420px">
<h3>
<svg class="abs" style="left:20.20px;top:23.30px;" width="15.40" height="17.60" viewBox="0 0 448 512" preserveAspectRatio="none"><path fill="#667eea" d="M159.300 5.400c7.800-7.300 19.900-7.200 27.700 .1c27.600 25.900 53.500 53.800 77.700 84c11-14.400 23.500-30.100 37-42.900c7.900-7.400 20.100-7.400 28 .1c34.600 33 63.900 76.600 84.500 118c20.300 40.800 33.800 82.500 33.800 111.900C448 404.200 348.200 512 224 512C98.400 512 0 404.100 0 276.500c0-38.400 17.800-85.300 45.400-131.700C73.300 97.700 112.700 48.600 159.300 5.400zM225.700 416c25.300 0 47.700-7 68.800-21c42.100-29.400 53.400-88.200 28.100-134.400c-4.500-9-16-9.600-22.500-2l-25.200 29.300c-6.600 7.600-18.500 7.400-24.700-.5c-16.500-21-46-58.500-62.800-79.800c-6.300-8-18.300-8.100-24.700-.1c-33.800 42.500-50.800 69.300-50.800 99.400C112 375.400 162.600 416 225.700 416z"/></svg>
<span class="t" style="left:48.31px;top:23px;line-height:20px;font-size:17.3px;color:#2d3748;letter-spacing:0.513px;-webkit-text-stroke:0.6px #2d3748;">Top Produse Consumate</span>
</h3>
<span class="t" style="left:394.43px;top:26px;line-height:18px;font-size:15.5px;color:#4a5568;letter-spacing:0.061px;">Luna curentă</span>
<div class="hr" style="left:20px;top:53px;width:466px"></div>
<div class="item" style="left:20px;top:74px">
<span class="t" style="left:11.50px;top:16px;line-height:18px;font-size:15.5px;color:#2d3748;letter-spacing:0.434px;-webkit-text-stroke:0.55px #2d3748;">Seringi 5ml sterile</span>
<span class="t" style="left:11.53px;top:40px;line-height:16px;font-size:13.2px;color:#718096;letter-spacing:0.179px;">Consumabile</span>
<span class="t" style="left:295.43px;top:28px;line-height:18px;font-size:15.5px;color:#2d3748;font-weight:700;transform:scaleX(1.0605);transform-origin:0 0;">2,450</span>
<div class="bar" style="left:351px;top:31px"><i style="width:85%"></i></div>
</div>
<div class="item" style="left:20px;top:157px">
<span class="t" style="left:10.93px;top:16px;line-height:18px;font-size:15.5px;color:#2d3748;letter-spacing:0.409px;-webkit-text-stroke:0.55px #2d3748;">Mănuși sterile L</span>
<span class="t" style="left:11.12px;top:40px;line-height:16px;font-size:13.2px;color:#718096;letter-spacing:0.158px;">Echipament Protecție</span>
<span class="t" style="left:295.16px;top:28px;line-height:18px;font-size:15.5px;color:#2d3748;font-weight:700;transform:scaleX(1.0676);transform-origin:0 0;">1,890</span>
<div class="bar" style="left:351px;top:31px"><i style="width:65%"></i></div>
</div>
<div class="item" style="left:20px;top:240px">
<span class="t" style="left:10.93px;top:16px;line-height:18px;font-size:15.5px;color:#2d3748;letter-spacing:0.566px;-webkit-text-stroke:0.55px #2d3748;">Dezinfectant 500ml</span>
<span class="t" style="left:11.53px;top:40px;line-height:16px;font-size:13.2px;color:#718096;letter-spacing:0.179px;">Consumabile</span>
<span class="t" style="left:295.16px;top:28px;line-height:18px;font-size:15.5px;color:#2d3748;font-weight:700;transform:scaleX(1.0676);transform-origin:0 0;">1,240</span>
<div class="bar" style="left:351px;top:31px"><i style="width:43%"></i></div>
</div>
<div class="item" style="left:20px;top:323px">
<span class="t" style="left:12.17px;top:16px;line-height:18px;font-size:15.5px;color:#2d3748;letter-spacing:0.438px;-webkit-text-stroke:0.55px #2d3748;">Adrenalină fiole 1mg</span>
<span class="t" style="left:11.12px;top:40px;line-height:16px;font-size:13.2px;color:#718096;letter-spacing:0.370px;">Medicamente</span>
<span class="t" style="left:308.57px;top:28px;line-height:18px;font-size:15.5px;color:#2d3748;font-weight:700;transform:scaleX(1.0823);transform-origin:0 0;">892</span>
<div class="bar" style="left:351px;top:31px"><i style="width:31%"></i></div>
</div>
</section>
</main>

</body>
</html>
